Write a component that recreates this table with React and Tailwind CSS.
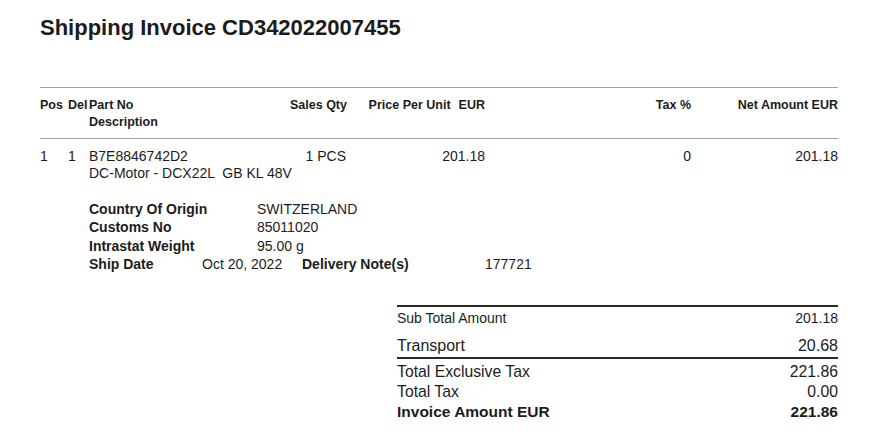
import React from 'react';

function TotalRow({ label, value, className = '' }) {
  return (
    <div className={`flex justify-between ${className}`}>
      <span>{label}</span>
      <span>{value}</span>
    </div>
  );
}

export default function App() {
  return (
    <div className="w-[881px] h-[442px] bg-white text-[#1c1c1c] font-['Liberation_Sans',Arial,sans-serif] pl-[40px] pr-[43px] overflow-hidden">
      <h1 className="pt-[15px] text-[22px] leading-[26px] font-bold">Shipping Invoice CD342022007455</h1>

      {/* table header */}
      <div className="mt-[46px] border-t border-b border-[#a3a3a3] pt-[9px] pb-[7px] text-[12.5px] leading-[17px] font-bold">
        <div className="grid grid-cols-[28px_21px_201px_56px_139px_206px_147px]">
          <span>Pos</span>
          <span>Del</span>
          <span>Part No</span>
          <span className="text-right whitespace-nowrap">Sales Qty</span>
          <span className="flex justify-end whitespace-nowrap">
            <span>Price Per Unit</span>
            <span className="ml-[8px]">EUR</span>
          </span>
          <span className="text-right">Tax %</span>
          <span className="text-right whitespace-nowrap">Net Amount EUR</span>
        </div>
        <div className="pl-[49px]">Description</div>
      </div>

      {/* line item */}
      <div className="pt-[9px] text-[14px] leading-[17px]">
        <div className="grid grid-cols-[28px_21px_201px_56px_139px_206px_147px]">
          <span>1</span>
          <span>1</span>
          <span>B7E8846742D2</span>
          <span className="text-right whitespace-nowrap">1 PCS</span>
          <span className="text-right">201.18</span>
          <span className="text-right">0</span>
          <span className="text-right">201.18</span>
        </div>
        <div className="pl-[49px] whitespace-pre">DC-Motor - DCX22L  GB KL 48V</div>
      </div>

      {/* details */}
      <div className="mt-[18px] pl-[49px] text-[14px] leading-[18.3px]">
        <div className="flex">
          <span className="w-[168px] font-bold">Country Of Origin</span>
          <span>SWITZERLAND</span>
        </div>
        <div className="flex">
          <span className="w-[168px] font-bold">Customs No</span>
          <span>85011020</span>
        </div>
        <div className="flex">
          <span className="w-[168px] font-bold">Intrastat Weight</span>
          <span>95.00 g</span>
        </div>
        <div className="flex">
          <span className="w-[113px] font-bold">Ship Date</span>
          <span className="w-[100px]">Oct 20, 2022</span>
          <span className="w-[183px] font-bold">Delivery Note(s)</span>
          <span>177721</span>
        </div>
      </div>

      {/* totals */}
      <div className="mt-[32px] ml-auto w-[441px] border-t-2 border-[#2a2a2a]">
        <TotalRow label="Sub Total Amount" value="201.18" className="pt-[1px] text-[14px] leading-[20px]" />
        <TotalRow
          label="Transport"
          value="20.68"
          className="pt-[8px] pb-[1px] text-[16px] leading-[20px] border-b-2 border-[#2a2a2a]"
        />
        <div className="pt-[3px] text-[15.75px] leading-[20px]">
          <TotalRow label="Total Exclusive Tax" value="221.86" />
          <TotalRow label="Total Tax" value="0.00" />
          <TotalRow label="Invoice Amount EUR" value="221.86" className="font-bold text-[15.5px]" />
        </div>
      </div>
    </div>
  );
}
